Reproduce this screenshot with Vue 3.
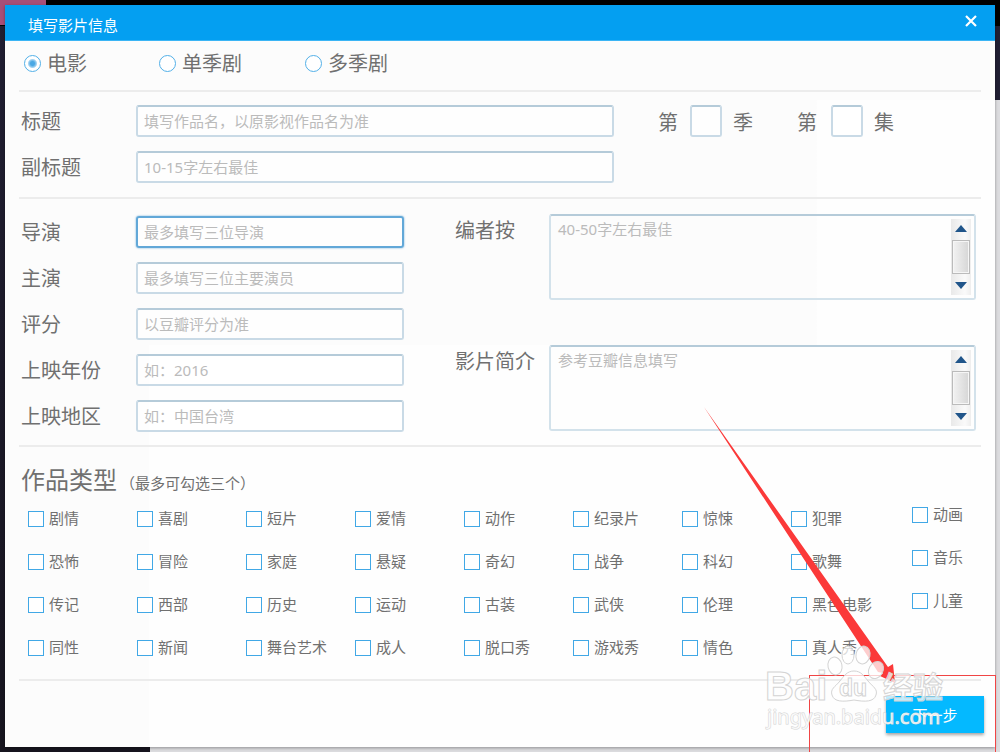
<template>
  <div class="page">
    <form class="dialog" @submit.prevent>
      <header class="titlebar">
        <h1>填写影片信息</h1>
        <button type="button" class="close" aria-label="关闭">
          <svg width="12" height="12" viewBox="0 0 12 12">
            <path d="M1 1L11 11M11 1L1 11" stroke="#fff" stroke-width="2.2" fill="none" />
          </svg>
        </button>
      </header>

      <div class="body">
        <section class="kinds">
          <label v-for="k in kinds" :key="k" class="kind">
            <input v-model="kind" type="radio" name="kind" :value="k" />
            <span>{{ k }}</span>
          </label>
        </section>

        <section class="titles">
          <div class="title-fields">
            <div v-for="f in titleFields" :key="f.id" class="field">
              <label :for="f.id">{{ f.label }}</label>
              <input :id="f.id" type="text" :placeholder="f.hint" />
            </div>
          </div>
          <div class="numbers">
            <label for="season">第</label>
            <input id="season" type="text" />
            <span class="unit">季</span>
            <label for="episode">第</label>
            <input id="episode" type="text" />
            <span class="unit">集</span>
          </div>
        </section>

        <section class="details">
          <div class="left">
            <div v-for="f in detailFields" :key="f.id" class="field">
              <label :for="f.id">{{ f.label }}</label>
              <input :id="f.id" type="text" :class="{ active: f.id === active }" :placeholder="f.hint" @focus="active = f.id" />
            </div>
          </div>
          <div class="right">
            <div v-for="f in longFields" :key="f.id" class="long-field">
              <label :for="f.id">{{ f.label }}</label>
              <div class="area">
                <textarea :id="f.id" :placeholder="f.hint"></textarea>
                <div class="scroll" aria-hidden="true">
                  <svg width="12" height="7" viewBox="0 0 12 7"><path d="M0 7L6 0L12 7Z" fill="#20558a" /></svg>
                  <div class="thumb"></div>
                  <svg width="12" height="7" viewBox="0 0 12 7"><path d="M0 0H12L6 7Z" fill="#20558a" /></svg>
                </div>
              </div>
            </div>
          </div>
        </section>

        <section class="genres">
          <h2>作品类型<small>（最多可勾选三个）</small></h2>
          <div class="genre-lists">
            <div class="genre-grid">
              <label v-for="g in genres" :key="g" class="genre">
                <input v-model="picked" type="checkbox" :value="g" />
                <span>{{ g }}</span>
              </label>
            </div>
            <div class="genre-side">
              <label v-for="g in sideGenres" :key="g" class="genre">
                <input v-model="picked" type="checkbox" :value="g" />
                <span>{{ g }}</span>
              </label>
            </div>
          </div>
        </section>
      </div>

      <footer class="footer">
        <button type="submit" class="next">下一步</button>
      </footer>
    </form>

    <svg class="marks" width="1000" height="760" viewBox="0 0 1000 760">
      <rect x="809.5" y="675.5" width="186" height="100" fill="none" stroke="#f04545" />
      <path d="M704 407L888 667L893 664L895 683L880 676L883 673L878 672Z" fill="#fb3939" />
      <g class="watermark">
        <text x="765" y="700" class="brand">Bai</text>
        <ellipse cx="835" cy="666" rx="7" ry="9" transform="rotate(-12 835 666)" />
        <ellipse cx="848" cy="655" rx="6" ry="9" />
        <ellipse cx="863" cy="655" rx="7" ry="9" transform="rotate(12 863 655)" />
        <ellipse cx="876" cy="670" rx="7" ry="9" transform="rotate(30 876 670)" />
        <path d="M854 671C861 671 864 676 868 681C873 687 878 689 876 695C874 702 865 702 854 700C843 702 834 702 832 695C830 689 835 687 840 681C844 676 847 671 854 671Z" />
        <text x="839" y="696" class="du">du</text>
        <text x="883" y="698" class="cn">经验</text>
        <text x="767" y="724" class="url">jingyan.baidu.com</text>
      </g>
    </svg>
  </div>
</template>

<script setup>
import { ref } from 'vue'

const kinds = ['电影', '单季剧', '多季剧']
const kind = ref('电影')
const active = ref('director')
const picked = ref([])

const titleFields = [
  { id: 'title', label: '标题', hint: '填写作品名，以原影视作品名为准' },
  { id: 'subtitle', label: '副标题', hint: '10-15字左右最佳' }
]

const detailFields = [
  { id: 'director', label: '导演', hint: '最多填写三位导演' },
  { id: 'cast', label: '主演', hint: '最多填写三位主要演员' },
  { id: 'score', label: '评分', hint: '以豆瓣评分为准' },
  { id: 'year', label: '上映年份', hint: '如：2016' },
  { id: 'region', label: '上映地区', hint: '如：中国台湾' }
]

const longFields = [
  { id: 'note', label: '编者按', hint: '40-50字左右最佳' },
  { id: 'intro', label: '影片简介', hint: '参考豆瓣信息填写' }
]

const genres = [
  '剧情', '喜剧', '短片', '爱情', '动作', '纪录片', '惊悚', '犯罪',
  '恐怖', '冒险', '家庭', '悬疑', '奇幻', '战争', '科幻', '歌舞',
  '传记', '西部', '历史', '运动', '古装', '武侠', '伦理', '黑色电影',
  '同性', '新闻', '舞台艺术', '成人', '脱口秀', '游戏秀', '情色', '真人秀'
]
const sideGenres = ['动画', '音乐', '儿童']
</script>

<style>
body {
  margin: 0;
}
</style>

<style scoped>
* {
  box-sizing: border-box;
}

.page {
  position: relative;
  min-height: 100vh;
  padding: 5px;
  overflow: hidden;
  font-family: "Noto Sans", "Noto Sans CJK SC", sans-serif;
  color: #707070;
  background:
    linear-gradient(#a84f78, #a84f78) 0 0 / 46px 25px no-repeat,
    linear-gradient(#000, #000) 0 0 / 100% 26px no-repeat,
    linear-gradient(#211f33, #211f33) 100% 26px / 50% 74px no-repeat,
    linear-gradient(#211f33, #17151f) 0 0 / 150px 100% no-repeat,
    #dcdcdf;
}

.dialog {
  background:
    linear-gradient(#fcfcfc, #fcfcfc) 0 0 / 100% 95px no-repeat,
    linear-gradient(#fcfcfc, #fcfcfc) 0 0 / 144px 100% no-repeat,
    linear-gradient(#fcfcfc, #fcfcfc) 0 0 / 82% 340px no-repeat,
    #fefefe;
  box-shadow: 0 1px 3px rgba(0, 0, 0, 0.35);
}

.titlebar {
  display: flex;
  align-items: center;
  justify-content: space-between;
  height: 36px;
  padding: 0 18px 0 23px;
  background: #049ff1;
  border-bottom: 1px solid #3bb5f5;
}

h1 {
  margin: 0;
  padding-top: 5px;
  font-size: 15px;
  line-height: 24px;
  font-weight: 400;
  color: #fff;
}

.close {
  display: flex;
  padding: 0 0 4px;
  border: 0;
  background: none;
  cursor: pointer;
}

.body {
  padding: 0 14px;
}

section {
  border-bottom: 2px solid #ececec;
}

.kinds {
  display: grid;
  grid-template-columns: 135px 146px auto;
  height: 51px;
  padding: 5px 5px 12px;
}

.kind {
  display: flex;
  align-items: center;
  gap: 6px;
  font-size: 20px;
  line-height: 32px;
}

.kind span,
.field label,
.numbers label,
.unit {
  padding-top: 2px;
}

.kind input {
  appearance: none;
  width: 17px;
  height: 17px;
  margin: 0;
  border: 1px solid #52b0e8;
  border-radius: 50%;
  background: #fff;
}

.kind input:checked {
  background: radial-gradient(circle, #4aa8e4 2px, #a4d3f1 4px, #fff 5px);
}

.titles {
  display: grid;
  grid-template-columns: minmax(0, 1fr) 318px;
  gap: 44px;
  padding: 13px 5px 14px 2px;
}

.title-fields,
.left {
  display: grid;
  gap: 14px;
}

.field {
  display: flex;
  align-items: center;
  height: 32px;
}

.field label {
  flex: 0 0 115px;
  font-size: 20px;
  line-height: 32px;
}

input[type="text"] {
  min-width: 0;
  height: 32px;
  padding: 0 8px;
  border: 2px solid #c9dae6;
  border-top-color: #b5cbd9;
  border-radius: 3px;
  background: rgba(255, 255, 255, 0.5);
  font-family: inherit;
  font-size: 15px;
  color: #666;
  outline: none;
}

.field input[type="text"] {
  flex: 1;
  padding: 0 6px;
}

input[type="text"].active {
  border-color: #62a8d8;
  box-shadow: 0 0 2px #62a8d8;
}

::placeholder {
  color: #bbb;
  opacity: 1;
}

.numbers {
  display: grid;
  grid-template-columns: 32px 32px 75px 34px 32px 30px;
  height: 32px;
  font-size: 20px;
  line-height: 32px;
}

.unit {
  padding-left: 11px;
}

.details {
  display: grid;
  grid-template-columns: 383fr 521fr;
  gap: 51px;
  padding: 15px 5px 13px 2px;
}

.left {
  padding-top: 2px;
}

.right {
  display: flex;
  flex-direction: column;
  gap: 45px;
}

.long-field {
  display: flex;
}

.long-field label {
  flex: 0 0 94px;
  padding-top: 1px;
  font-size: 20px;
  line-height: 32px;
}

.area {
  display: flex;
  flex: 1;
  height: 86px;
  padding: 3px;
  border: 2px solid #d3e2eb;
  border-top-color: #b5cbd9;
  border-radius: 3px;
}

textarea {
  flex: 1;
  min-width: 0;
  padding: 0 4px;
  border: 0;
  resize: none;
  overflow: hidden;
  background: none;
  font-family: inherit;
  font-size: 15px;
  line-height: 20px;
  color: #666;
  outline: none;
}

.scroll {
  display: flex;
  flex-direction: column;
  align-items: center;
  justify-content: space-between;
  width: 20px;
  padding: 6px 0;
  background: linear-gradient(90deg, #e9e9e9, #fafafa 70%, #eee);
}

.thumb {
  width: 18px;
  height: 34px;
  border: 1px solid #bbb;
  background: linear-gradient(90deg, #f2f2f2, #d6d6d6);
  box-shadow: inset 0 0 0 1px #f6f6f6;
}

.genres {
  padding: 17px 5px 23px 2px;
}

h2 {
  margin: 0 0 11px;
  font-size: 24px;
  line-height: 32px;
  font-weight: 400;
}

small {
  margin-left: 3px;
  font-size: 15px;
}

.genre-lists {
  display: flex;
  gap: 12px;
  padding-left: 7px;
}

.genre-grid {
  display: grid;
  flex: 1;
  grid-template-columns: repeat(8, minmax(0, 1fr));
  gap: 26px 0;
}

.genre-side {
  display: flex;
  flex-direction: column;
  gap: 26px;
  width: 64px;
  margin-top: -4px;
}

.genre {
  display: flex;
  align-items: center;
  gap: 5px;
  height: 17px;
  font-size: 15px;
  line-height: 17px;
  white-space: nowrap;
}

.genre input {
  appearance: none;
  flex: none;
  width: 16px;
  height: 16px;
  margin: 0;
  border: 1px solid #41a8e6;
  background: #fff;
}

.genre input:checked {
  background: #41a8e6;
}

.footer {
  display: flex;
  justify-content: flex-end;
  padding: 15px 11px 14px;
}

.next {
  width: 98px;
  height: 37px;
  border: 0;
  background: #04b9ff;
  box-shadow: 0 2px 3px rgba(0, 0, 0, 0.35);
  font-family: inherit;
  font-size: 15px;
  color: #fff;
  cursor: pointer;
}

.marks {
  position: absolute;
  top: 0;
  left: 0;
  pointer-events: none;
}

.watermark {
  fill: rgba(255, 255, 255, 0.75);
  stroke: #d4d4d4;
  stroke-width: 1px;
}

.brand {
  font: 700 40px "Liberation Sans", sans-serif;
}

.du {
  font: 700 23px "Liberation Sans", sans-serif;
}

.cn {
  font: 700 30px "Noto Sans CJK SC", sans-serif;
}

.url {
  font: 400 20px "Noto Sans", sans-serif;
  paint-order: stroke;
}
</style>
